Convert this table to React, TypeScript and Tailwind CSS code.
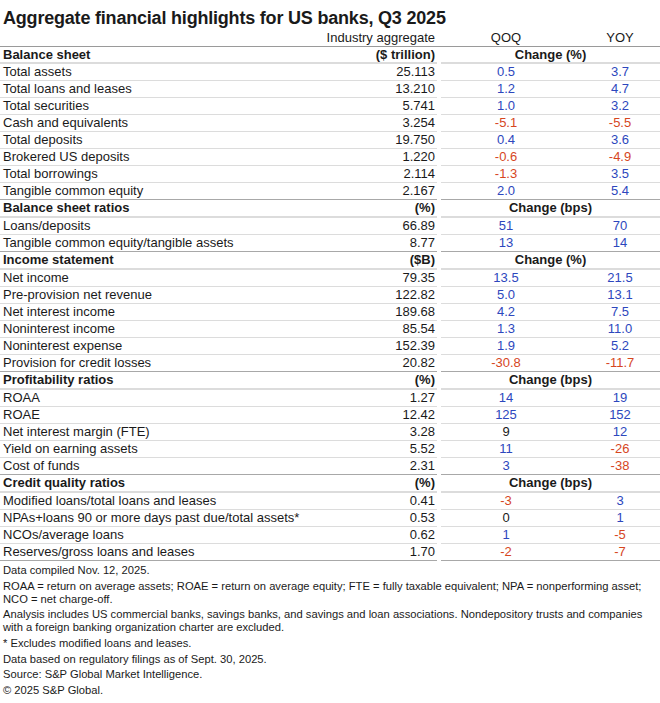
import React from "react";

type Row = [string, string, string, string];
type Section = { title: string; unit: string; change: string; rows: Row[] };

const sections: Section[] = [
  {
    title: "Balance sheet",
    unit: "($ trillion)",
    change: "Change (%)",
    rows: [
      ["Total assets", "25.113", "0.5", "3.7"],
      ["Total loans and leases", "13.210", "1.2", "4.7"],
      ["Total securities", "5.741", "1.0", "3.2"],
      ["Cash and equivalents", "3.254", "-5.1", "-5.5"],
      ["Total deposits", "19.750", "0.4", "3.6"],
      ["Brokered US deposits", "1.220", "-0.6", "-4.9"],
      ["Total borrowings", "2.114", "-1.3", "3.5"],
      ["Tangible common equity", "2.167", "2.0", "5.4"],
    ],
  },
  {
    title: "Balance sheet ratios",
    unit: "(%)",
    change: "Change (bps)",
    rows: [
      ["Loans/deposits", "66.89", "51", "70"],
      ["Tangible common equity/tangible assets", "8.77", "13", "14"],
    ],
  },
  {
    title: "Income statement",
    unit: "($B)",
    change: "Change (%)",
    rows: [
      ["Net income", "79.35", "13.5", "21.5"],
      ["Pre-provision net revenue", "122.82", "5.0", "13.1"],
      ["Net interest income", "189.68", "4.2", "7.5"],
      ["Noninterest income", "85.54", "1.3", "11.0"],
      ["Noninterest expense", "152.39", "1.9", "5.2"],
      ["Provision for credit losses", "20.82", "-30.8", "-11.7"],
    ],
  },
  {
    title: "Profitability ratios",
    unit: "(%)",
    change: "Change (bps)",
    rows: [
      ["ROAA", "1.27", "14", "19"],
      ["ROAE", "12.42", "125", "152"],
      ["Net interest margin (FTE)", "3.28", "9", "12"],
      ["Yield on earning assets", "5.52", "11", "-26"],
      ["Cost of funds", "2.31", "3", "-38"],
    ],
  },
  {
    title: "Credit quality ratios",
    unit: "(%)",
    change: "Change (bps)",
    rows: [
      ["Modified loans/total loans and leases", "0.41", "-3", "3"],
      ["NPAs+loans 90 or more days past due/total assets*", "0.53", "0", "1"],
      ["NCOs/average loans", "0.62", "1", "-5"],
      ["Reserves/gross loans and leases", "1.70", "-2", "-7"],
    ],
  },
];

function tone(v: string, blackOverride: boolean) {
  if (blackOverride) return "text-[#1a1a1a]";
  if (v.startsWith("-")) return "text-[#d6461e]";
  if (v === "0") return "text-[#1a1a1a]";
  return "text-[#2d47bd]";
}

function DataRow({ r, last }: { r: Row; last: boolean }) {
  const b = last ? "border-[#a8a8a8]" : "border-[#dcdcdc]";
  const qBlack = r[0] === "Net interest margin (FTE)";
  return (
    <div className="flex h-[17px] leading-[16px]">
      <div className={`w-[307px] pl-[3px] border-b ${b} whitespace-nowrap`}>{r[0]}</div>
      <div className={`w-[130px] pr-[2px] text-right border-b ${b}`}>{r[1]}</div>
      <div className="w-[4px]" />
      <div className={`w-[130px] text-center border-b ${b} ${tone(r[2], qBlack)}`}>{r[2]}</div>
      <div className={`flex-1 pl-[9px] text-center border-b ${b} ${tone(r[3], false)}`}>{r[3]}</div>
    </div>
  );
}

export default function App() {
  return (
    <div
      className="w-[660px] bg-white text-[#1a1a1a] text-[13px]"
      style={{ fontFamily: '"Liberation Sans", Arial, sans-serif' }}
    >
      <div className="pl-[3px] pt-[7px] h-[29px] text-[18px] font-bold leading-[22px] tracking-[-0.2px] whitespace-nowrap">
        Aggregate financial highlights for US banks, Q3 2025
      </div>
      <div className="flex h-[18px] leading-[17px]">
        <div className="w-[307px] border-b border-[#9a9a9a]" />
        <div className="w-[130px] pr-[2px] text-right border-b border-[#9a9a9a] whitespace-nowrap">Industry aggregate</div>
        <div className="w-[4px] border-b border-[#9a9a9a]" />
        <div className="w-[130px] text-center border-b border-[#9a9a9a]">QOQ</div>
        <div className="flex-1 pl-[9px] text-center border-b border-[#9a9a9a]">YOY</div>
      </div>
      {sections.map((s, si) => (
        <div key={s.title}>
          <div
            className={`flex font-bold ${si === 0 ? "h-[17px] leading-[15px]" : "h-[18px] leading-[16px]"}`}
          >
            <div className="w-[307px] pl-[3px] border-b-2 border-[#dcdcdc] whitespace-nowrap">{s.title}</div>
            <div className="w-[130px] pr-[2px] text-right border-b-2 border-[#dcdcdc]">{s.unit}</div>
            <div className="w-[4px]" />
            <div className="flex-1 text-center border-b-2 border-[#dcdcdc]">{s.change}</div>
          </div>
          {s.rows.map((r, i) => (
            <DataRow key={r[0]} r={r} last={i === s.rows.length - 1} />
          ))}
        </div>
      ))}
      <div className="pl-[3px] pt-[3px] text-[11.2px] leading-[13px] flex flex-col gap-[2.7px] whitespace-nowrap">
        <p>Data compiled Nov. 12, 2025.</p>
        <p>
          ROAA = return on average assets; ROAE = return on average equity; FTE = fully taxable equivalent; NPA =
          nonperforming asset;
          <br />
          NCO = net charge-off.
        </p>
        <p>
          Analysis includes US commercial banks, savings banks, and savings and loan associations. Nondepository trusts
          and companies
          <br />
          with a foreign banking organization charter are excluded.
        </p>
        <p>* Excludes modified loans and leases.</p>
        <p>Data based on regulatory filings as of Sept. 30, 2025.</p>
        <p>Source: S&amp;P Global Market Intelligence.</p>
        <p>© 2025 S&amp;P Global.</p>
      </div>
    </div>
  );
}
